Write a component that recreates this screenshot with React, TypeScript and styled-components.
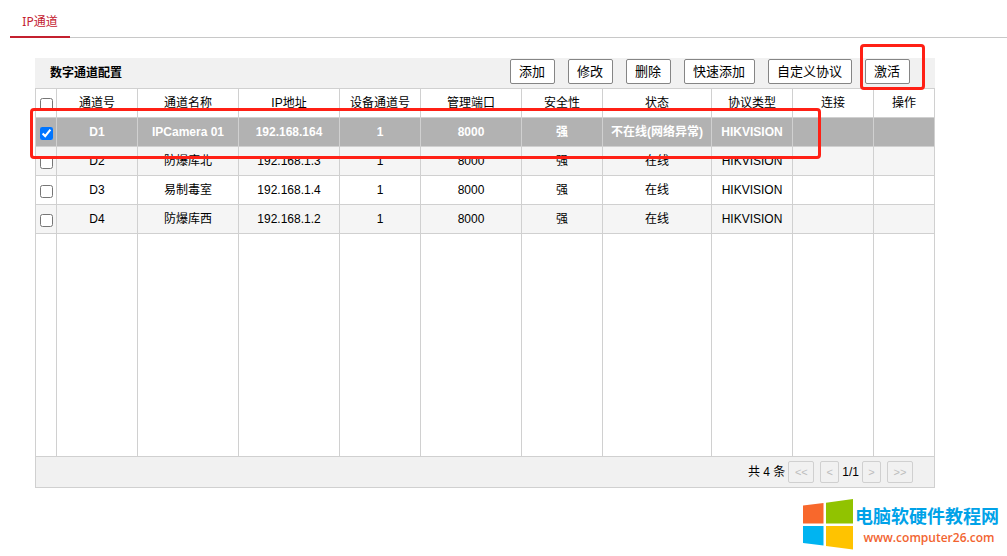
import React, { useState } from "react";
import styled, { createGlobalStyle, css } from "styled-components";

const GlobalStyle = createGlobalStyle`
  *, *::before, *::after { box-sizing: border-box; }
  body {
    margin: 0;
    background: #fff;
    color: #000;
    font: 12px/18px "Liberation Sans", "Noto Sans CJK SC", sans-serif;
  }
  button, input { font: inherit; }
`;

const TabBar = styled.nav`
  display: flex;
  margin-left: 10px;
  padding-top: 5px;
  border-bottom: 1px solid #c8c8c8;
`;

const Tab = styled.a`
  min-width: 60px;
  height: 33px;
  margin-bottom: -1px;
  padding: 0 12px;
  border-bottom: 2px solid #c4202f;
  color: #c4202f;
  font-family: "Noto Sans", "Noto Sans CJK SC", sans-serif;
  line-height: 34px;
  text-align: center;
  text-decoration: none;
`;

const Panel = styled.section`
  margin: 20px 72px 0 35px;
`;

const PanelHeader = styled.header`
  display: flex;
  align-items: flex-start;
  justify-content: space-between;
  height: 30px;
  padding: 1px 25px 0 15px;
  background: #f1f1f1;
`;

const PanelTitle = styled.h2`
  margin: 0;
  font-size: 12px;
  font-weight: 700;
  line-height: 28px;
`;

const Toolbar = styled.div`
  display: flex;
  gap: 13px;
`;

const ToolButton = styled.button`
  height: 25px;
  padding: 0 9px 0 8px;
  border: 1px solid #858585;
  border-radius: 2px;
  background: #fff;
  color: #000;
  font-size: 13px;
  line-height: 23px;
  white-space: nowrap;
`;

const Marked = styled.div`
  position: relative;
`;

const outline = css`
  position: absolute;
  z-index: 1;
  border: 3px solid #ff2015;
  border-radius: 4px;
  pointer-events: none;
`;

const ButtonMark = styled.span`
  ${outline}
  inset: -15px -15px -6px -5px;
`;

const RowMark = styled.span`
  ${outline}
  top: 20px;
  right: 114px;
  left: -5px;
  height: 51px;
`;

const Table = styled.table`
  width: 100%;
  border: solid #d0d0d0;
  border-width: 1px 0 0 1px;
  border-collapse: separate;
  border-spacing: 0;
  table-layout: fixed;
`;

const cell = css`
  height: 29px;
  padding: 0;
  border: solid #d0d0d0;
  border-width: 0 1px 1px 0;
  text-align: center;
  white-space: nowrap;
`;

const HeadCell = styled.th`
  ${cell}
  font-weight: 400;
`;

const Cell = styled.td`
  ${cell}
`;

const Row = styled.tr<{ $selected: boolean }>`
  background: #fff;
  &:nth-child(even) { background: #f5f5f5; }
  ${(p) => p.$selected && css`
    && { background: #b2b2b2; }
    color: #fff;
    font-weight: 700;
  `}
`;

const BlankCell = styled.td`
  ${cell}
  height: 223px;
`;

const Check = styled.input`
  display: block;
  width: 13px;
  height: 13px;
  margin: 3px auto 0;
`;

const Footer = styled.footer`
  display: flex;
  align-items: center;
  justify-content: flex-end;
  height: 31px;
  padding-right: 21px;
  border: solid #d0d0d0;
  border-width: 0 1px 1px 1px;
  background: #f1f1f1;
`;

const Total = styled.span`
  margin-right: 3px;
`;

const PageButton = styled.button<{ $wide?: boolean }>`
  width: ${(p) => (p.$wide ? 26 : 19)}px;
  height: 22px;
  padding: 0;
  border: 1px solid #d0d0d0;
  border-radius: 2px;
  background: #f1f1f1;
  color: #bdbdbd;
  font-size: 11px;
  line-height: 20px;
`;

const PagePair = styled.div`
  display: flex;
  gap: 6px;
`;

const PageNumber = styled.span`
  margin: 0 3px;
`;

const Brand = styled.a`
  display: flex;
  gap: 2px;
  width: max-content;
  margin: 11px 8px 0 auto;
  text-decoration: none;
`;

const BrandText = styled.span`
  display: flex;
  flex-direction: column;
  align-items: center;
  padding-top: 3px;
`;

const BrandName = styled.strong`
  color: #00a2e8;
  font: 700 18px/27px "Noto Sans CJK SC", sans-serif;
`;

const BrandUrl = styled.span`
  padding-left: 4px;
  color: #f26430;
  font: 600 12px/17px "Open Sans", sans-serif;
`;

const widths = [21, 81, 101, 101, 81, 101, 81, 109, 81, 81, 61];
const headings = ["通道号", "通道名称", "IP地址", "设备通道号", "管理端口", "安全性", "状态", "协议类型", "连接", "操作"];
const channels = [
  ["D1", "IPCamera 01", "192.168.164", "1", "8000", "强", "不在线(网络异常)", "HIKVISION", "", ""],
  ["D2", "防爆库北", "192.168.1.3", "1", "8000", "强", "在线", "HIKVISION", "", ""],
  ["D3", "易制毒室", "192.168.1.4", "1", "8000", "强", "在线", "HIKVISION", "", ""],
  ["D4", "防爆库西", "192.168.1.2", "1", "8000", "强", "在线", "HIKVISION", "", ""],
];
const actions = ["添加", "修改", "删除", "快速添加", "自定义协议"];

function WindowsLogo() {
  return (
    <svg width="50" height="51" viewBox="0 0 50 51" aria-hidden="true">
      <path d="M0 6.5 20.5 4v20.5H0z" fill="#f8682c" />
      <path d="M23 3.7 50 0v24.5H23z" fill="#91c300" />
      <path d="M0 27h20.5v19.5L0 44z" fill="#00b4f1" />
      <path d="M23 27h27v23.5L23 47z" fill="#ffc300" />
    </svg>
  );
}

export default function App() {
  const [selected, setSelected] = useState<string[]>(["D1"]);
  const toggle = (id: string) =>
    setSelected((ids) => (ids.includes(id) ? ids.filter((i) => i !== id) : [...ids, id]));
  const all = selected.length === channels.length;

  return (
    <>
      <GlobalStyle />
      <TabBar>
        <Tab href="#ip">IP通道</Tab>
      </TabBar>
      <main>
        <Panel>
          <PanelHeader>
            <PanelTitle>数字通道配置</PanelTitle>
            <Toolbar>
              {actions.map((a) => (
                <ToolButton key={a} type="button">{a}</ToolButton>
              ))}
              <Marked>
                <ToolButton type="button">激活</ToolButton>
                <ButtonMark />
              </Marked>
            </Toolbar>
          </PanelHeader>
          <Marked>
            <Table>
              <colgroup>
                {widths.map((w, i) => <col key={i} width={w} />)}
              </colgroup>
              <thead>
                <tr>
                  <HeadCell>
                    <Check
                      type="checkbox"
                      aria-label="全选"
                      checked={all}
                      onChange={() => setSelected(all ? [] : channels.map((c) => c[0]))}
                    />
                  </HeadCell>
                  {headings.map((h) => <HeadCell key={h} scope="col">{h}</HeadCell>)}
                </tr>
              </thead>
              <tbody>
                {channels.map((c) => (
                  <Row key={c[0]} $selected={selected.includes(c[0])}>
                    <Cell>
                      <Check
                        type="checkbox"
                        aria-label={c[0]}
                        checked={selected.includes(c[0])}
                        onChange={() => toggle(c[0])}
                      />
                    </Cell>
                    {c.map((v, i) => <Cell key={i}>{v}</Cell>)}
                  </Row>
                ))}
                <tr>
                  {widths.map((_, i) => <BlankCell key={i} />)}
                </tr>
              </tbody>
            </Table>
            <RowMark />
          </Marked>
          <Footer>
            <Total>共 4 条</Total>
            <PagePair>
              <PageButton type="button" disabled $wide>&lt;&lt;</PageButton>
              <PageButton type="button" disabled>&lt;</PageButton>
            </PagePair>
            <PageNumber>1/1</PageNumber>
            <PagePair>
              <PageButton type="button" disabled>&gt;</PageButton>
              <PageButton type="button" disabled $wide>&gt;&gt;</PageButton>
            </PagePair>
          </Footer>
        </Panel>
        <Brand href="#home">
          <WindowsLogo />
          <BrandText>
            <BrandName>电脑软硬件教程网</BrandName>
            <BrandUrl>www.computer26.com</BrandUrl>
          </BrandText>
        </Brand>
      </main>
    </>
  );
}
